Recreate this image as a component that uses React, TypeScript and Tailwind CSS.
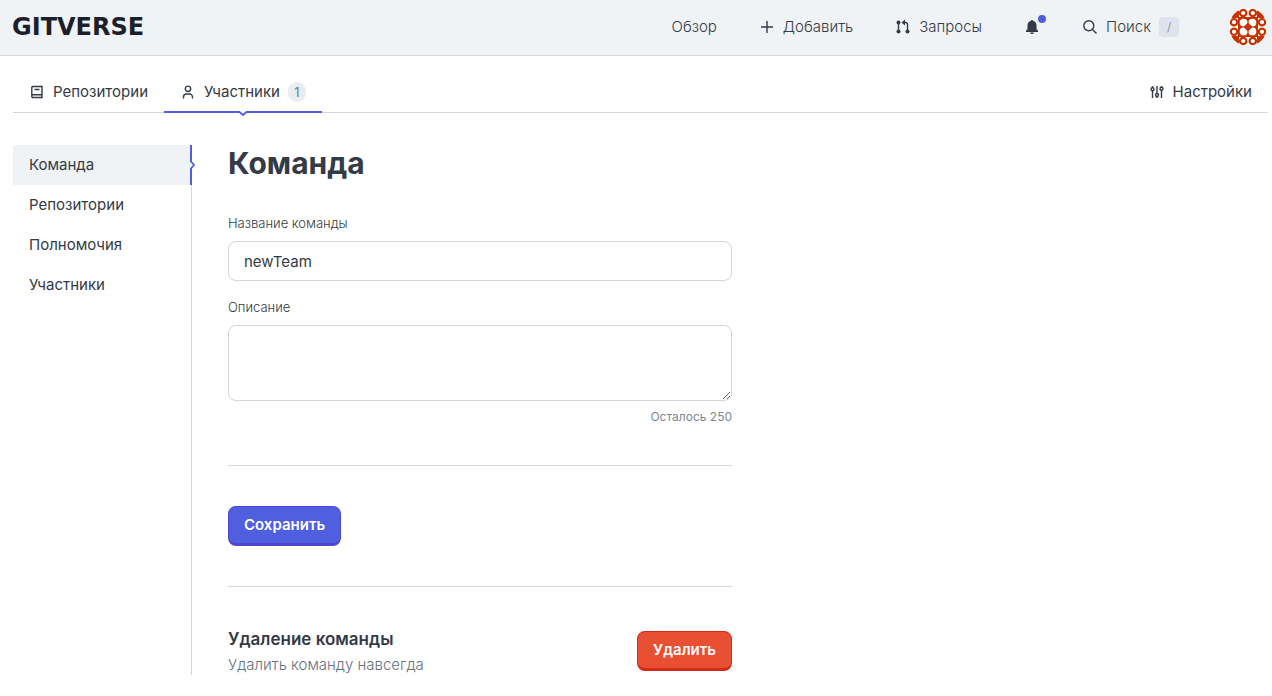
import { useState } from "react";
import type { ReactNode } from "react";

const sideLinks = ["Команда", "Репозитории", "Полномочия", "Участники"];

function Icon({ children }: { children: ReactNode }) {
  return (
    <svg
      viewBox="0 0 16 16"
      fill="none"
      stroke="currentColor"
      strokeWidth="1.4"
      className="h-4 w-4 shrink-0"
      aria-hidden="true"
    >
      {children}
    </svg>
  );
}

function Avatar() {
  const rings = [
    [14.2, 5], [23.8, 5], [14.2, 33], [23.8, 33],
    [5, 14.2], [5, 23.8], [33, 14.2], [33, 23.8],
  ];
  const dots = [
    [14.6, 14.6], [23.4, 14.6], [14.6, 23.4], [23.4, 23.4],
  ];

  return (
    <svg viewBox="0 0 38 38" className="h-[38px] w-[38px]" aria-hidden="true">
      <clipPath id="avatar-clip">
        <circle cx="19" cy="19" r="19" />
      </clipPath>
      <g clipPath="url(#avatar-clip)">
        <rect width="38" height="38" fill="#fff" />
        <path d="M0 0h10v10H0zM28 0h10v10H28zM0 28h10v10H0zM28 28h10v10H28z" fill="#c63300" />
        <rect x="9" y="9" width="20" height="20" fill="#c63300" />
        {rings.map(([x, y]) => (
          <circle key={`${x}-${y}`} cx={x} cy={y} r="3.2" fill="#fff" stroke="#c63300" strokeWidth="2.2" />
        ))}
        {dots.map(([x, y]) => (
          <circle key={`${x}-${y}`} cx={x} cy={y} r="3.9" fill="#fff" />
        ))}
        <path d="M19 14.500l4.500 4.500-4.500 4.500-4.500-4.500z" fill="#c63300" />
      </g>
    </svg>
  );
}

function Header() {
  return (
    <header className="flex h-14 items-center justify-between border-b border-[#d0d7de] bg-[#eff3f6] pr-[5px] pb-px pl-3">
      <a href="#" className="font-['DejaVu_Sans',sans-serif] text-2xl leading-6 font-bold text-[#1c1f2a]">
        GITVERSE
      </a>
      <nav className="flex items-center gap-[42px] text-[15px] leading-6 font-light">
        <a href="#">Обзор</a>
        <button className="flex items-center gap-2">
          <Icon>
            <path d="M8 2v12M2 8h12" />
          </Icon>
          Добавить
        </button>
        <a href="#" className="flex items-center gap-2">
          <Icon>
            <g fill="currentColor" stroke="none">
              <circle cx="3.500" cy="3.500" r="2" />
              <circle cx="3.500" cy="12.500" r="2" />
              <circle cx="12.500" cy="12.500" r="2" />
              <path d="M10 .5v6L6.500 3.500z" />
            </g>
            <path d="M3.500 4v8M12.500 12V5.500a2 2 0 0 0-2-2H9" />
          </Icon>
          Запросы
        </a>
        <button className="relative" aria-label="Уведомления">
          <svg viewBox="0 0 16 16" fill="currentColor" className="h-4 w-4" aria-hidden="true">
            <path d="M8 1c.7 0 1.200.5 1.200 1.100C11.400 2.600 12.500 4.300 12.500 6.500V10l1.500 1.700V13H2v-1.300L3.500 10V6.500c0-2.200 1.100-3.900 3.300-4.400C6.800 1.500 7.300 1 8 1zM6 13.500h4a2 1.500 0 0 1-4 0z" />
          </svg>
          <span className="absolute -top-1 -right-1.5 h-2 w-2 rounded-full bg-[#505fe0]" />
        </button>
        <button className="flex items-center gap-2">
          <Icon>
            <circle cx="6.800" cy="6.800" r="5" />
            <path d="m10.500 10.500 4 4" />
          </Icon>
          Поиск
          <kbd className="flex h-5 w-5 items-center justify-center rounded bg-[#dfe4ec] font-['Inter',sans-serif] text-xs text-[#7b8794]">
            /
          </kbd>
        </button>
        <button className="ml-2" aria-label="Профиль">
          <Avatar />
        </button>
      </nav>
    </header>
  );
}

function Tabs() {
  return (
    <nav className="mt-4 mr-1 ml-[13px] flex justify-between border-b border-[#d0d7de] text-[15px] leading-6">
      <div className="flex">
        <a href="#" className="flex h-10 items-center gap-2 px-4">
          <Icon>
            <path d="M4 2.500h9v11H4a1.200 1.200 0 0 1-1.200-1.200V3.700A1.200 1.200 0 0 1 4 2.500zM2.800 10.700H13M5.500 5.500h5" />
          </Icon>
          Репозитории
        </a>
        <a href="#" className="relative flex h-10 items-center gap-2 px-4" aria-current="page">
          <Icon>
            <circle cx="8" cy="4.800" r="2.700" />
            <path d="M3.500 14.500v-1.500a3 3 0 0 1 3-3h3a3 3 0 0 1 3 3v1.500" />
          </Icon>
          Участники
          <span className="flex h-5 min-w-[18px] items-center justify-center rounded-full bg-[#e8edf2] px-1 text-[13px] text-[#6b7f92]">
            1
          </span>
          <span className="absolute inset-x-0 -bottom-px h-0.5 bg-[#505fe0]" />
          <svg viewBox="0 0 10 5" className="absolute -bottom-1 left-1/2 h-[5px] w-2.5 -translate-x-1/2" aria-hidden="true">
            <path d="M1 0h8L5 4z" fill="#fff" />
            <path d="M0 1h1.500L5 4l3.500-3H10" fill="none" stroke="#505fe0" strokeWidth="1.800" />
          </svg>
        </a>
      </div>
      <a href="#" className="flex h-10 items-center gap-2 px-4">
        <Icon>
          <path d="M3.500 2v1.500M3.500 7v7M8 2v7M8 13v1M12.500 2v1M12.500 6.500V14" />
          <circle cx="3.500" cy="5.300" r="1.500" />
          <circle cx="8" cy="11" r="1.500" />
          <circle cx="12.500" cy="4.800" r="1.500" />
        </Icon>
        Настройки
      </a>
    </nav>
  );
}

function Sidebar() {
  return (
    <nav className="w-[179px] shrink-0 border-r border-[#d0d7de] text-[15px] leading-6">
      {sideLinks.map((label, i) => (
        <a
          key={label}
          href="#"
          aria-current={i === 0 ? "page" : undefined}
          className={i === 0 ? "relative flex h-10 items-center bg-[#eff3f6] px-4" : "flex h-10 items-center px-4"}
        >
          {label}
          {i === 0 && (
            <>
              <span className="absolute inset-y-0 -right-px w-0.5 bg-[#505fe0]" />
              <svg viewBox="0 0 5 10" className="absolute top-1/2 -right-1 h-2.5 w-[5px] -translate-y-1/2" aria-hidden="true">
                <path d="M0 1v8l4-4z" fill="#eff3f6" />
                <path d="M1 0v1.500L4 5 1 8.500V10" fill="none" stroke="#505fe0" strokeWidth="1.800" />
              </svg>
            </>
          )}
        </a>
      ))}
    </nav>
  );
}

export default function App() {
  const [name, setName] = useState("newTeam");
  const [description, setDescription] = useState("");

  return (
    <div className="bg-white font-['Inter',sans-serif] text-[#343a46]">
      <Header />
      <Tabs />
      <div className="mt-8 ml-[13px] flex gap-9">
        <Sidebar />
        <main className="w-full max-w-[504px]">
          <h1 className="text-3xl leading-9 font-bold">Команда</h1>
          <form className="mt-8" onSubmit={(e) => e.preventDefault()}>
            <label htmlFor="team-name" className="block text-[13px] leading-5 font-light">
              Название команды
            </label>
            <input
              id="team-name"
              value={name}
              onChange={(e) => setName(e.target.value)}
              className="mt-2 block h-10 w-full rounded-lg border border-[#cdd7e0] px-[15px] text-[15px] leading-6 outline-none"
            />
            <label htmlFor="team-description" className="mt-4 block text-[13px] leading-5 font-light">
              Описание
            </label>
            <textarea
              id="team-description"
              maxLength={250}
              value={description}
              onChange={(e) => setDescription(e.target.value)}
              className="mt-2 block h-[76px] w-full rounded-lg border border-[#cdd7e0] px-[15px] py-2 text-[15px] leading-6 outline-none"
            />
            <p className="mt-2 text-right text-xs leading-4 text-[#7b8794]">
              Осталось {250 - description.length}
            </p>
            <div className="mt-10 border-y border-[#d0d7de] py-10">
              <button
                type="submit"
                className="flex h-10 items-center rounded-lg border border-b-3 border-[#4f46cf] bg-[#505fe0] px-[15px] text-[15px] leading-6 font-semibold text-white"
              >
                Сохранить
              </button>
            </div>
          </form>
          <section className="mt-10 flex items-center justify-between">
            <div>
              <h2 className="text-[17px] leading-6 font-semibold">Удаление команды</h2>
              <p className="mt-1 text-[15px] leading-5 font-light text-[#66717e]">Удалить команду навсегда</p>
            </div>
            <button className="flex h-10 items-center rounded-lg border border-b-3 border-[#d42a1a] bg-[#e94f33] px-[15px] text-[15px] leading-6 font-semibold text-white">
              Удалить
            </button>
          </section>
        </main>
      </div>
    </div>
  );
}
